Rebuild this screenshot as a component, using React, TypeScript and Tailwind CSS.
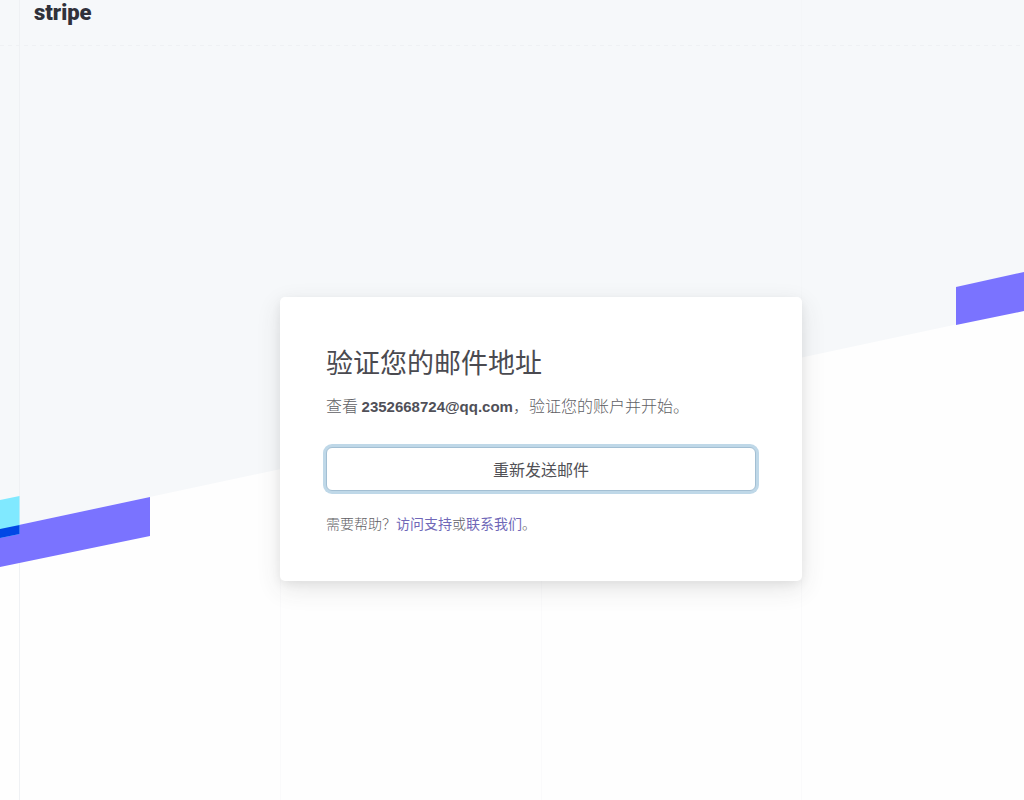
import type { ReactNode } from "react";

function Backdrop() {
  return (
    <svg
      className="absolute inset-0 h-full w-full"
      viewBox="0 0 1024 800"
      preserveAspectRatio="none"
      aria-hidden="true"
    >
      <rect width="1024" height="800" fill="#fefefe" />
      <path d="M0 0H1024V310L0 529Z" fill="#f6f8fa" />

      {/* Guide lines */}
      <path d="M19.5 0V800" stroke="#eff1f4" />
      <path d="M280.5 580V800M541.5 580V800M801.5 580V800" stroke="#fafafb" />
      <path d="M801.5 0V300" stroke="#f4f6f8" />
      <path d="M0 45.5H1024" stroke="#eff1f4" strokeDasharray="4 4" />

      {/* Stripes */}
      <path d="M0 529L150 497V536L0 567Z" fill="#7a73ff" />
      <path d="M0 500L19.5 496V534L0 538Z" fill="#80e9ff" />
      <path d="M0 529L19.5 525V534L0 538Z" fill="#0048e5" />
      <path d="M956 287L1024 272V311L956 325Z" fill="#7a73ff" />
    </svg>
  );
}

function HelpLink({ href, children }: { href: string; children: ReactNode }) {
  return (
    <a href={href} className="font-normal text-[#7068b8] hover:text-[#0a2540]">
      {children}
    </a>
  );
}

export default function App() {
  return (
    <div
      lang="zh-CN"
      className="relative flex min-h-screen flex-col overflow-hidden font-['Noto_Sans_CJK_SC',sans-serif] text-[#606064]"
    >
      <Backdrop />

      <header className="relative flex px-[34px]">
        <a href="/" className="font-['Roboto',sans-serif] text-[22px] leading-[26px] font-black text-[#30313a]">
          stripe
        </a>
      </header>

      <main className="relative flex flex-1 justify-center pt-[271px] pl-[58px]">
        <section className="w-full max-w-[522px] self-start rounded-[5px] bg-white px-[46px] pt-[47px] pb-12 shadow-[0_8px_24px_rgba(60,60,60,0.12),0_3px_10px_rgba(0,0,0,0.06)]">
          <h1 className="text-[27px] leading-9 font-normal text-[#4a4a50]">验证您的邮件地址</h1>
          <p className="mt-[15px] text-base leading-5 font-light">
            查看{" "}
            <strong className="font-['Liberation_Sans',sans-serif] text-[15px] font-bold text-[#505058]">
              2352668724@qq.com
            </strong>
            ，验证您的账户并开始。
          </p>
          <button
            type="button"
            className="mt-[30px] block h-11 w-full rounded-md border border-[#a3bfd3] bg-white text-base text-[#505055] shadow-[0_0_0_3px_#bfd8e8]"
          >
            重新发送邮件
          </button>
          <p className="mt-[22px] text-sm leading-5 font-light">
            需要帮助？
            <HelpLink href="#support">访问支持</HelpLink>或<HelpLink href="#contact">联系我们</HelpLink>。
          </p>
        </section>
      </main>
    </div>
  );
}
